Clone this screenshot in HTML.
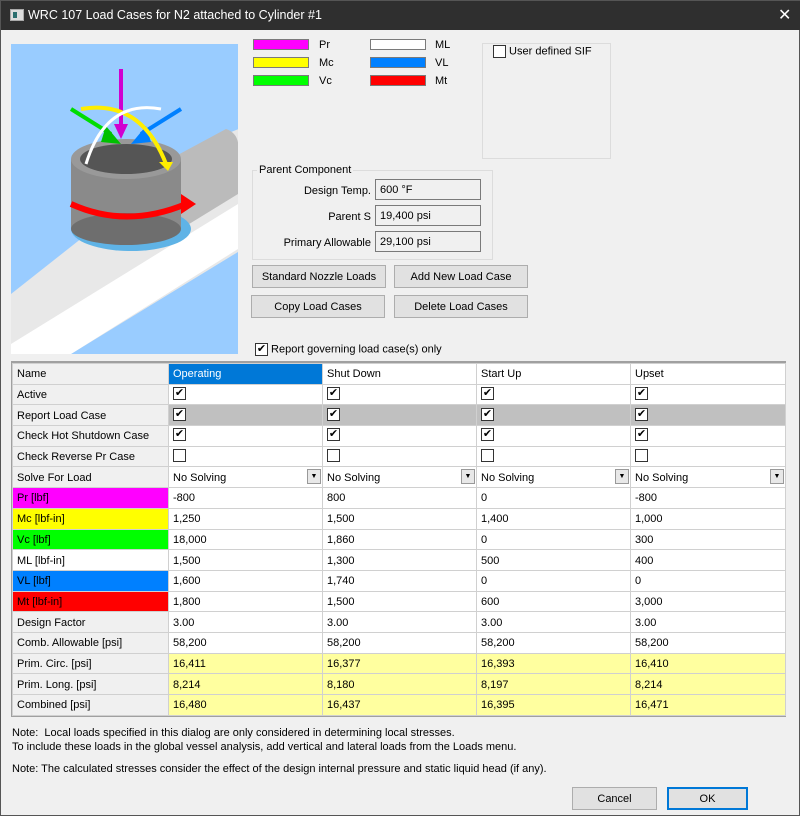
<!DOCTYPE html>
<html><head><style>
*{box-sizing:border-box;margin:0;padding:0}
body{width:800px;height:816px;background:#f0f0f0;font-family:"Liberation Sans",sans-serif;font-size:11px;color:#000;position:relative;overflow:hidden;border:1px solid #555}
.a{position:absolute}
.title{left:0;top:0;width:800px;height:29px;background:#2f2f2f;color:#fff;font-size:12.5px}
.sw{position:absolute;width:56px;height:11px;border:1px solid #7a7a7a}
.lb{position:absolute;font-size:11px}
.fld{position:absolute;left:374px;width:106px;height:21px;border:1px solid #7a7a7a;background:#f0f0f0;padding:4px 4px}
.btn{position:absolute;height:23px;border:1px solid #adadad;background:#e1e1e1;text-align:center;line-height:22px}
table{border-collapse:collapse;position:absolute;left:11px;top:362px;table-layout:fixed}
tr{height:20.7px}
td{border:1px solid #d0d0d0;height:20.7px;line-height:15px;padding:2px 0 0 4px;white-space:nowrap;overflow:hidden;background:#fff;position:relative;vertical-align:middle}
td.h{background:#f0f0f0}
tr.y td:not(.h){background:#ffff9f}
.cb{display:inline-block;width:13px;height:13px;border:1px solid #333;background:#fff;vertical-align:middle;font-size:11px;line-height:11px;text-align:center}
td .cb{vertical-align:top;margin-top:-1px}
tr.g td:not(.h){background:#c0c0c0}
.dd{position:absolute;right:1px;top:2px;width:14px;height:15px;border:1px solid #999;background:#e8e8e8;font-size:7px;text-align:center;line-height:13px}
</style></head><body>
<div class="a title"><div class="a" style="left:9px;top:8px;width:14px;height:12px;background:#ddd;border:1px solid #aaa"><div style="margin:2px;width:4px;height:6px;background:#2b6e6e"></div></div><div class="a" style="left:27px;top:7px">WRC 107 Load Cases for N2 attached to Cylinder #1</div><div class="a" style="left:777px;top:4px;font-size:16px">✕</div></div>

<svg class="a" style="left:10px;top:43px" width="227" height="310" viewBox="0 0 227 310">
<rect width="227" height="310" fill="#99ccff"/>
<polygon points="0,250 190,100 240,80 240,200 60,310 0,310" fill="#e8e8e8"/>
<polygon points="0,310 60,310 227,205 227,160 0,300" fill="#fff"/>
<path d="M150,120 L215,85 Q230,90 227,110 L227,150 L170,185 Z" fill="#bbb"/>
<ellipse cx="120" cy="185" rx="60" ry="22" fill="#5fb3e6"/>
<rect x="60" y="115" width="110" height="70" fill="#8a8a8a"/>
<ellipse cx="115" cy="185" rx="55" ry="16" fill="#6e6e6e"/>
<ellipse cx="115" cy="115" rx="55" ry="20" fill="#999"/>
<ellipse cx="115" cy="115" rx="46" ry="15" fill="#555"/>
<path d="M60,160 Q115,185 175,160" stroke="#f00" stroke-width="6" fill="none"/>
<polygon points="170,150 185,160 170,170" fill="#f00"/>
<line x1="110" y1="25" x2="110" y2="85" stroke="#d000d0" stroke-width="4"/><polygon points="103,80 117,80 110,95" fill="#d000d0"/>
<line x1="60" y1="65" x2="100" y2="90" stroke="#00dd00" stroke-width="4"/><polygon points="95,82 110,100 90,98" fill="#00c000"/>
<line x1="170" y1="65" x2="130" y2="90" stroke="#0080ff" stroke-width="4"/><polygon points="135,82 120,100 140,98" fill="#0080ff"/>
<path d="M70,65 Q130,55 155,120" stroke="#ffee00" stroke-width="4" fill="none"/><polygon points="148,118 162,118 157,127" fill="#ffee00"/>
<path d="M150,65 Q95,55 75,120" stroke="#fff" stroke-width="3" fill="none"/>
</svg>

<div class="sw" style="left:252px;top:38px;background:#ff00ff"></div><div class="lb" style="left:318px;top:38px">Pr</div>
<div class="sw" style="left:252px;top:56px;background:#ffff00"></div><div class="lb" style="left:318px;top:56px">Mc</div>
<div class="sw" style="left:252px;top:74px;background:#00ff00"></div><div class="lb" style="left:318px;top:74px">Vc</div>
<div class="sw" style="left:369px;top:38px;background:#fff"></div><div class="lb" style="left:434px;top:38px">ML</div>
<div class="sw" style="left:369px;top:56px;background:#0080ff"></div><div class="lb" style="left:434px;top:56px">VL</div>
<div class="sw" style="left:369px;top:74px;background:#f00"></div><div class="lb" style="left:434px;top:74px">Mt</div>
<div class="a" style="left:481px;top:42px;width:129px;height:116px;border:1px solid #dcdcdc"></div>
<div class="a" style="left:490px;top:44px;background:#f0f0f0;padding:0 2px"><span class="cb"></span> User defined SIF</div>

<div class="a" style="left:251px;top:169px;width:241px;height:90px;border:1px solid #dcdcdc"></div>
<div class="a" style="left:256px;top:163px;background:#f0f0f0;padding:0 2px">Parent Component</div>
<div class="a" style="left:260px;top:184px;width:110px;text-align:right">Design Temp.</div><div class="fld" style="top:178px">600 °F</div>
<div class="a" style="left:260px;top:210px;width:110px;text-align:right">Parent S</div><div class="fld" style="top:204px">19,400 psi</div>
<div class="a" style="left:260px;top:236px;width:110px;text-align:right">Primary Allowable</div><div class="fld" style="top:230px">29,100 psi</div>
<div class="btn" style="left:251px;top:264px;width:134px">Standard Nozzle Loads</div>
<div class="btn" style="left:393px;top:264px;width:134px">Add New Load Case</div>
<div class="btn" style="left:250px;top:294px;width:134px">Copy Load Cases</div>
<div class="btn" style="left:393px;top:294px;width:134px">Delete Load Cases</div>
<div class="a" style="left:254px;top:342px"><span class="cb">✔</span> Report governing load case(s) only</div>

<div class="a" style="left:10px;top:360px;width:775px;height:356px;background:#a0a0a0"></div>
<table>
<colgroup><col style="width:156px"><col style="width:154px"><col style="width:154px"><col style="width:154px"><col style="width:155px"></colgroup>
<tr><td class="h">Name</td><td style="background:#0078d7;color:#fff">Operating</td><td>Shut Down</td><td>Start Up</td><td>Upset</td></tr>
<tr><td class="h">Active</td><td><span class="cb">✔</span></td><td><span class="cb">✔</span></td><td><span class="cb">✔</span></td><td><span class="cb">✔</span></td></tr>
<tr class="g"><td class="h">Report Load Case</td><td><span class="cb">✔</span></td><td><span class="cb">✔</span></td><td><span class="cb">✔</span></td><td><span class="cb">✔</span></td></tr>
<tr><td class="h">Check Hot Shutdown Case</td><td><span class="cb">✔</span></td><td><span class="cb">✔</span></td><td><span class="cb">✔</span></td><td><span class="cb">✔</span></td></tr>
<tr><td class="h">Check Reverse Pr Case</td><td><span class="cb"></span></td><td><span class="cb"></span></td><td><span class="cb"></span></td><td><span class="cb"></span></td></tr>
<tr><td class="h">Solve For Load</td><td>No Solving<span class="dd">▼</span></td><td>No Solving<span class="dd">▼</span></td><td>No Solving<span class="dd">▼</span></td><td>No Solving<span class="dd">▼</span></td></tr>
<tr><td class="h" style="background:#ff00ff">Pr [lbf]</td><td>-800</td><td>800</td><td>0</td><td>-800</td></tr>
<tr><td class="h" style="background:#ffff00">Mc [lbf-in]</td><td>1,250</td><td>1,500</td><td>1,400</td><td>1,000</td></tr>
<tr><td class="h" style="background:#00ff00">Vc [lbf]</td><td>18,000</td><td>1,860</td><td>0</td><td>300</td></tr>
<tr><td class="h" style="background:#fff">ML [lbf-in]</td><td>1,500</td><td>1,300</td><td>500</td><td>400</td></tr>
<tr><td class="h" style="background:#0080ff">VL [lbf]</td><td>1,600</td><td>1,740</td><td>0</td><td>0</td></tr>
<tr><td class="h" style="background:#ff0000">Mt [lbf-in]</td><td>1,800</td><td>1,500</td><td>600</td><td>3,000</td></tr>
<tr><td class="h">Design Factor</td><td>3.00</td><td>3.00</td><td>3.00</td><td>3.00</td></tr>
<tr><td class="h">Comb. Allowable [psi]</td><td>58,200</td><td>58,200</td><td>58,200</td><td>58,200</td></tr>
<tr class="y"><td class="h">Prim. Circ. [psi]</td><td>16,411</td><td>16,377</td><td>16,393</td><td>16,410</td></tr>
<tr class="y"><td class="h">Prim. Long. [psi]</td><td>8,214</td><td>8,180</td><td>8,197</td><td>8,214</td></tr>
<tr class="y"><td class="h">Combined [psi]</td><td>16,480</td><td>16,437</td><td>16,395</td><td>16,471</td></tr>
</table>

<div class="a" style="left:11px;top:725px;line-height:14px">Note:&nbsp; Local loads specified in this dialog are only considered in determining local stresses.<br>To include these loads in the global vessel analysis, add vertical and lateral loads from the Loads menu.</div>
<div class="a" style="left:11px;top:762px">Note: The calculated stresses consider the effect of the design internal pressure and static liquid head (if any).</div>
<div class="btn" style="left:571px;top:786px;width:85px">Cancel</div>
<div class="btn" style="left:666px;top:786px;width:81px;border:2px solid #0078d7;line-height:20px">OK</div>
</body></html>
